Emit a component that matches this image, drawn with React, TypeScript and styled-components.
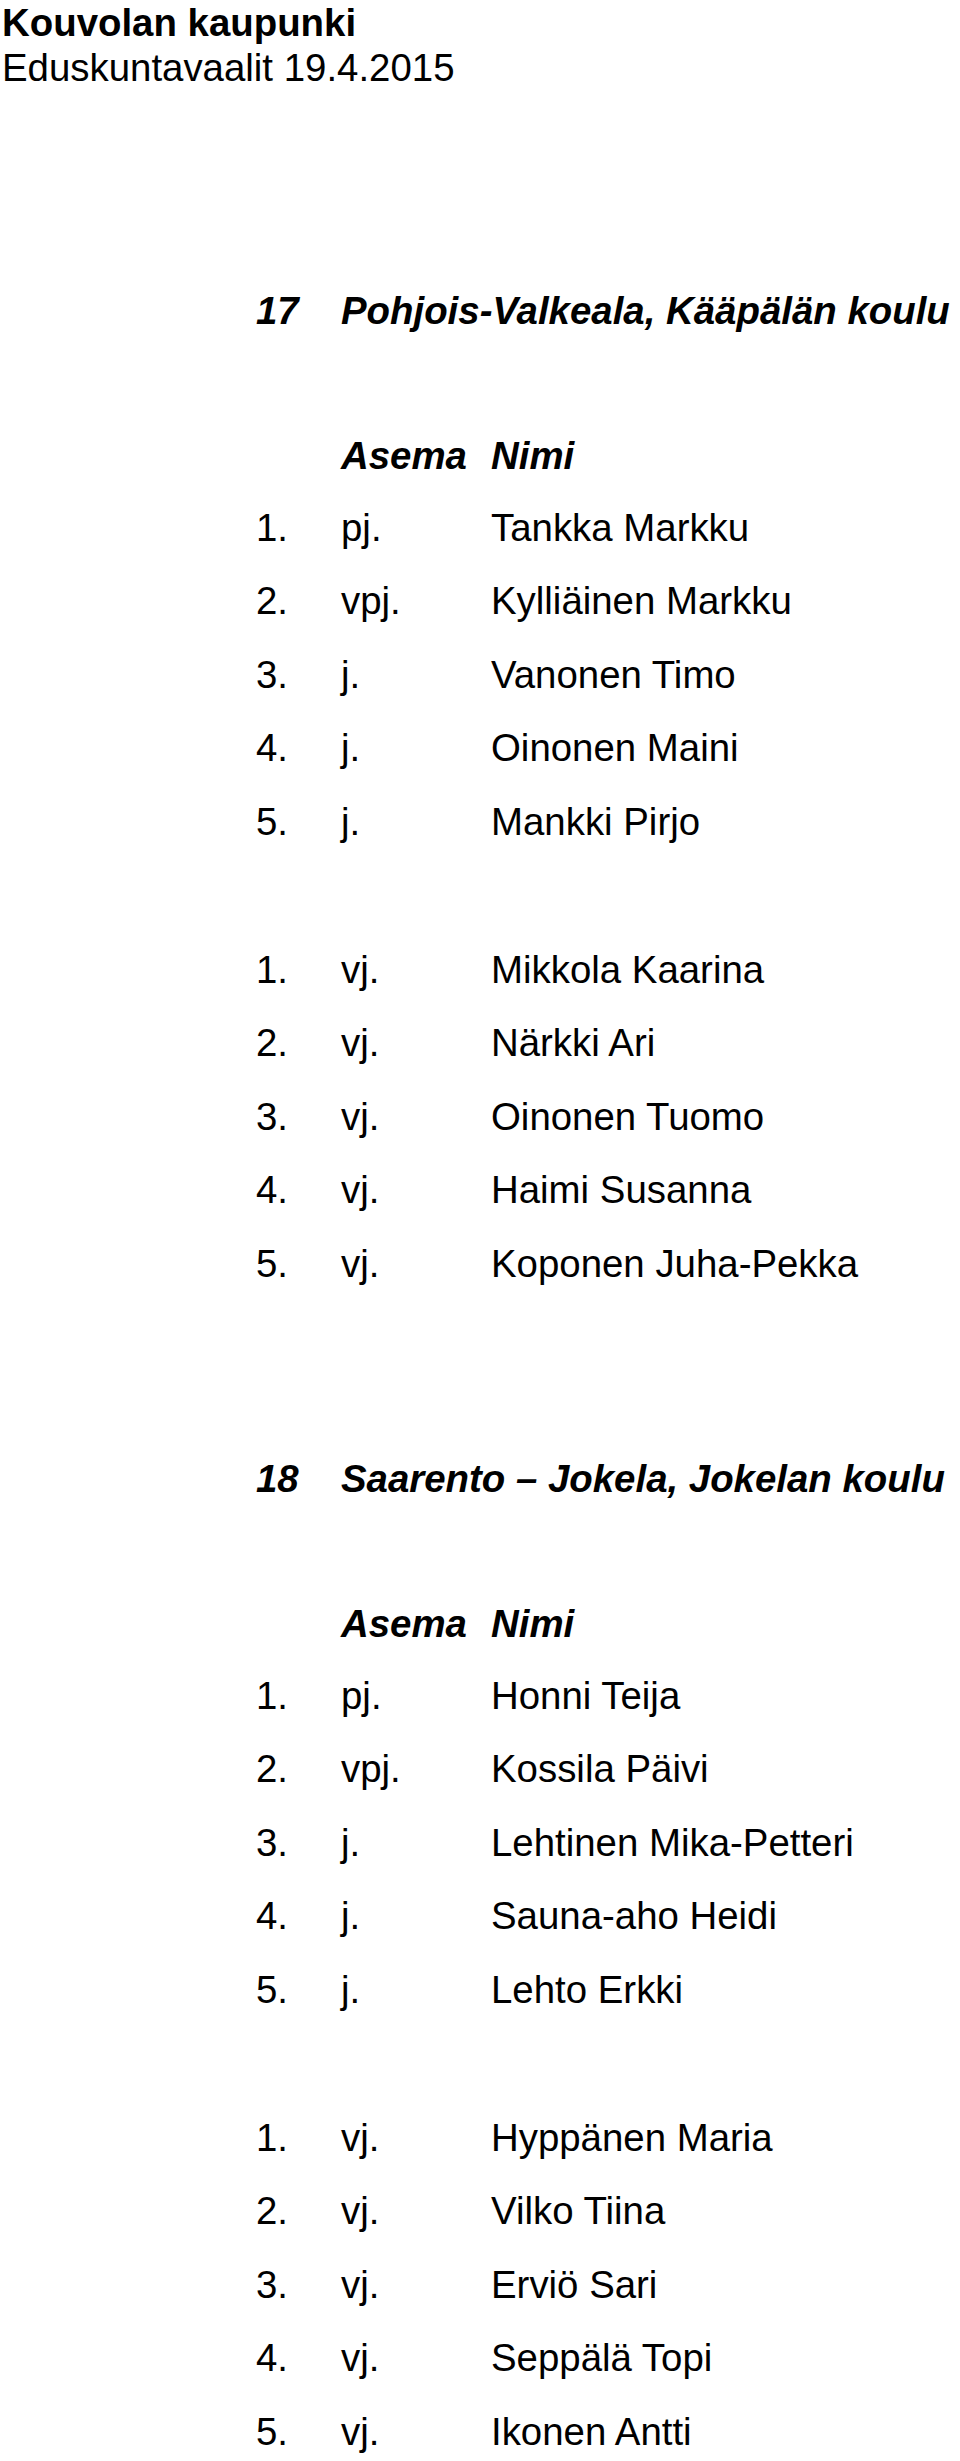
import React from 'react'
import styled, { createGlobalStyle } from 'styled-components'

type Member = { no: string; role: string; name: string }
type Board = { id: string; place: string; members: Member[]; deputies: Member[] }

const boards: Board[] = [
  {
    id: '17',
    place: 'Pohjois-Valkeala, Kääpälän koulu',
    members: [
      { no: '1.', role: 'pj.', name: 'Tankka Markku' },
      { no: '2.', role: 'vpj.', name: 'Kylliäinen Markku' },
      { no: '3.', role: 'j.', name: 'Vanonen Timo' },
      { no: '4.', role: 'j.', name: 'Oinonen Maini' },
      { no: '5.', role: 'j.', name: 'Mankki Pirjo' }
    ],
    deputies: [
      { no: '1.', role: 'vj.', name: 'Mikkola Kaarina' },
      { no: '2.', role: 'vj.', name: 'Närkki Ari' },
      { no: '3.', role: 'vj.', name: 'Oinonen Tuomo' },
      { no: '4.', role: 'vj.', name: 'Haimi Susanna' },
      { no: '5.', role: 'vj.', name: 'Koponen Juha-Pekka' }
    ]
  },
  {
    id: '18',
    place: 'Saarento – Jokela, Jokelan koulu',
    members: [
      { no: '1.', role: 'pj.', name: 'Honni Teija' },
      { no: '2.', role: 'vpj.', name: 'Kossila Päivi' },
      { no: '3.', role: 'j.', name: 'Lehtinen Mika-Petteri' },
      { no: '4.', role: 'j.', name: 'Sauna-aho Heidi' },
      { no: '5.', role: 'j.', name: 'Lehto Erkki' }
    ],
    deputies: [
      { no: '1.', role: 'vj.', name: 'Hyppänen Maria' },
      { no: '2.', role: 'vj.', name: 'Vilko Tiina' },
      { no: '3.', role: 'vj.', name: 'Erviö Sari' },
      { no: '4.', role: 'vj.', name: 'Seppälä Topi' },
      { no: '5.', role: 'vj.', name: 'Ikonen Antti' }
    ]
  }
]

const GlobalStyle = createGlobalStyle`
  body {
    margin: 0;
    background: #ffffff;
    color: #000000;
    font-family: 'Liberation Sans', Arial, sans-serif;
    font-size: 38.4px;
  }
`

// flex column so the section margins do not collapse into the header's
const Page = styled.main`
  display: flex;
  flex-direction: column;
  width: 960px;
  overflow: hidden;
`

const Header = styled.header`
  padding-left: 2px;
  line-height: 45px;
  margin-bottom: 42.5px;
`

const Org = styled.div`
  font-weight: 700;
`

const Election = styled.div`
  font-weight: 400;
`

const Section = styled.section`
  display: flex;
  flex-direction: column;
  padding-left: 256px;
  margin-top: 141.25px;
`

const Title = styled.h2`
  margin: 0;
  display: grid;
  grid-template-columns: 85px 1fr;
  font-size: 38.4px;
  font-style: italic;
  font-weight: 700;
  line-height: 74px;
  white-space: nowrap;
`

const Row = styled.div<{ $head?: boolean }>`
  display: grid;
  grid-template-columns: 85px 150px 1fr;
  white-space: nowrap;
  line-height: ${p => (p.$head ? '70px' : '73.5px')};
  font-style: ${p => (p.$head ? 'italic' : 'normal')};
  font-weight: ${p => (p.$head ? 700 : 400)};
`

const HeadRow = styled(Row)`
  margin-top: 73px;
`

const Group = styled.div<{ $gap?: boolean }>`
  margin-top: ${p => (p.$gap ? '74.5px' : '0')};
`

const MemberRows: React.FC<{ list: Member[]; gap?: boolean }> = ({ list, gap }) => (
  <Group $gap={gap}>
    {list.map(m => (
      <Row key={m.no + m.role}>
        <span>{m.no}</span>
        <span>{m.role}</span>
        <span>{m.name}</span>
      </Row>
    ))}
  </Group>
)

const App: React.FC = () => (
  <Page>
    <GlobalStyle />
    <Header>
      <Org>Kouvolan kaupunki</Org>
      <Election>Eduskuntavaalit 19.4.2015</Election>
    </Header>
    {boards.map(b => (
      <Section key={b.id}>
        <Title>
          <span>{b.id}</span>
          <span>{b.place}</span>
        </Title>
        <HeadRow $head>
          <span />
          <span>Asema</span>
          <span>Nimi</span>
        </HeadRow>
        <MemberRows list={b.members} />
        <MemberRows list={b.deputies} gap />
      </Section>
    ))}
  </Page>
)

export default App
